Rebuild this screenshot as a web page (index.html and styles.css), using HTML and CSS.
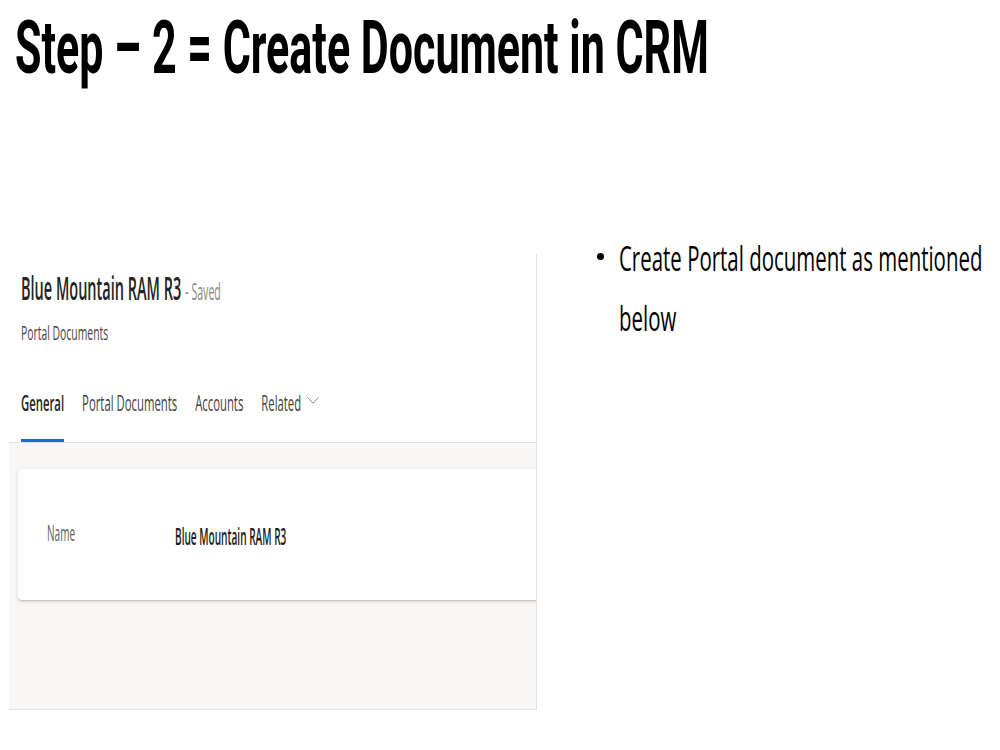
FILE: index.html
```html
<!DOCTYPE html>
<html lang="en">
<head>
  <meta charset="UTF-8" />
  <meta name="viewport" content="width=device-width, initial-scale=1.0"/>
  <title>Step 2 - Create Document in CRM</title>
  <link rel="stylesheet" href="styles.css">
</head>
<body>
  <h1 class="slide-title"><span class="tall">Step – 2 = Create Document in CRM</span></h1>

  <div class="slide-body">
    <div class="crm">
      <div class="record-head">
        <div class="record-title"><span class="tall">Blue Mountain RAM R3<span class="saved">- Saved</span></span></div>
        <div class="record-type"><span class="tall">Portal Documents</span></div>
        <div class="tabs">
          <div class="tab active"><span class="tall">General</span></div>
          <div class="tab"><span class="tall">Portal Documents</span></div>
          <div class="tab"><span class="tall">Accounts</span></div>
          <div class="tab"><span class="tall">Related</span>
            <svg class="chevron" viewBox="0 0 12 7" width="12" height="7"><polyline points="0.5,0.5 6,6.2 11.5,0.5" /></svg>
          </div>
        </div>
      </div>

      <div class="record-body">
        <div class="card">
          <div class="field-label"><span class="tall">Name</span></div>
          <div class="field-value"><span class="tall">Blue Mountain RAM R3</span></div>
        </div>
      </div>
    </div>

    <ul class="notes">
      <li><span class="dot"></span><span class="tall">Create Portal document as mentioned below</span></li>
    </ul>
  </div>
</body>
</html>
```

FILE: styles.css
```css
html, body {
  margin: 0;
}
body {
  font-family: "Open Sans", "Liberation Sans", sans-serif;
  background: #fff;
  color: #000;
  overflow: hidden;
}

/* slide text is tall and narrow: set it small, then stretch it up */
.tall {
  display: inline-block;
  white-space: nowrap;
  transform-origin: 0 0;
}

.slide-title {
  display: flex;
  align-items: flex-start;
  height: 81px;
  margin: 0;
  padding-left: 15px;
  font-family: Roboto, "Open Sans", sans-serif;
  font-size: 43px;
  font-weight: 700;
}
.slide-title .tall {
  margin-top: 4px;
  transform: scaleY(1.73);
}

.slide-body {
  display: flex;
  align-items: flex-start;
  margin-top: 147px;
  padding-left: 9px;
}

/* CRM record form */
.crm {
  flex: none;
  width: 527px;
  margin-top: 26px;
  border-right: 1px solid #e1e1e1;
  overflow: hidden;
}
.record-head {
  padding: 12px 0 0 12px;
  border-bottom: 1px solid #e1dfdd;
}
.record-title {
  display: flex;
  align-items: flex-start;
  height: 42px;
  font-size: 14.5px;
  font-weight: 600;
  color: #242424;
}
.record-title .tall {
  transform: scaleY(2.27);
}
.saved {
  margin-left: 4px;
  font-size: 10.6px;
  font-weight: 400;
  color: #8a8886;
}
.record-type {
  display: flex;
  align-items: flex-start;
  height: 27px;
  margin-top: 11px;
  font-size: 10.4px;
  color: #484644;
}
.record-type .tall {
  transform: scaleY(1.923);
}

.tabs {
  display: flex;
  gap: 18px;
  margin-top: 41.5px;
}
.tab {
  display: flex;
  align-items: flex-start;
  height: 30px;
  padding-bottom: 21.5px;
  border-bottom: 3px solid transparent;
  font-size: 11.33px;
  color: #424242;
}
.tab .tall {
  transform: scaleY(1.942);
}
.tab.active {
  font-weight: 600;
  color: #242424;
  border-bottom-color: #2463de;
}
.chevron {
  margin: 9px 0 0 6px;
  fill: none;
  stroke: #8a8886;
  stroke-width: 1;
}

.record-body {
  box-sizing: border-box;
  height: 267px;
  padding: 26px 0 0 9px;
  background: #f8f7f6;
  border-bottom: 1px solid #e1e1e1;
}
.card {
  box-sizing: border-box;
  display: grid;
  grid-template-columns: 128px 1fr;
  align-items: start;
  width: 560px;
  height: 131px;
  padding: 48.5px 0 0 29px;
  background: #fff;
  border-radius: 4px;
  box-shadow: 0 1.6px 3.6px rgba(0,0,0,0.13), 0 0.3px 0.9px rgba(0,0,0,0.11);
}
.field-label {
  display: flex;
  font-size: 10.08px;
  color: #616161;
}
.field-label .tall {
  transform: scaleY(2.083);
}
.field-value {
  display: flex;
  margin-top: 1.8px;
  font-size: 10.08px;
  font-weight: 600;
  color: #1b1b1b;
}
.field-value .tall {
  transform: scaleY(2.381);
}

/* bullet notes beside the form */
.notes {
  list-style: none;
  width: 400px;
  margin: 0 0 0 60px;
  padding: 0;
}
.notes li {
  display: flex;
  align-items: flex-start;
  gap: 15px;
}
.dot {
  flex: none;
  width: 7px;
  height: 7px;
  margin-top: 25px;
  border-radius: 50%;
  background: #000;
}
.notes .tall {
  width: 375px;
  white-space: normal;
  font-size: 20.44px;
  line-height: 35px;
  transform: scaleY(1.712);
}
```
